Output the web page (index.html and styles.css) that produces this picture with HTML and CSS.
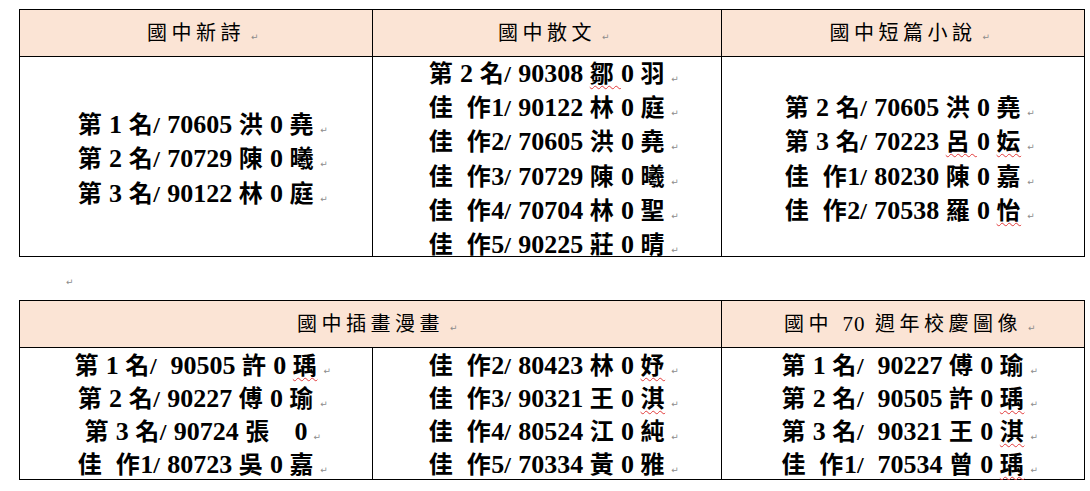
FILE: index.html
```html
<!DOCTYPE html>
<html lang="zh-Hant">
<head>
<meta charset="utf-8">
<title>得獎名單</title>
<link rel="stylesheet" href="styles.css">
</head>
<body>
<table class="awards t1">
  <colgroup><col class="c1"><col class="c2"><col class="c3"></colgroup>
  <tr class="head">
    <th>國中新詩<span class="pm">↵</span></th>
    <th>國中散文<span class="pm">↵</span></th>
    <th>國中短篇小說<span class="pm">↵</span></th>
  </tr>
  <tr class="body">
    <td><div class="cell">
      <div class="line">第 <span class="n">1</span> 名/ <span class="n">70605</span> 洪 <span class="n">0</span> 堯<span class="pm">↵</span></div>
      <div class="line">第 <span class="n">2</span> 名/ <span class="n">70729</span> 陳 <span class="n">0</span> 曦<span class="pm">↵</span></div>
      <div class="line">第 <span class="n">3</span> 名/ <span class="n">90122</span> 林 <span class="n">0</span> 庭<span class="pm">↵</span></div>
    </div></td>
    <td><div class="cell">
      <div class="line">第 <span class="n">2</span> 名/ <span class="n">90308</span> <span class="sp">鄒 </span><span class="n">0</span> 羽<span class="pm">↵</span></div>
      <div class="line">佳  作<span class="n">1</span>/ <span class="n">90122</span> 林 <span class="n">0</span> 庭<span class="pm">↵</span></div>
      <div class="line">佳  作<span class="n">2</span>/ <span class="n">70605</span> 洪 <span class="n">0</span> 堯<span class="pm">↵</span></div>
      <div class="line">佳  作<span class="n">3</span>/ <span class="n">70729</span> 陳 <span class="n">0</span> 曦<span class="pm">↵</span></div>
      <div class="line">佳  作<span class="n">4</span>/ <span class="n">70704</span> 林 <span class="n">0</span> 聖<span class="pm">↵</span></div>
      <div class="line">佳  作<span class="n">5</span>/ <span class="n">90225</span> 莊 <span class="n">0</span> 晴<span class="pm">↵</span></div>
    </div></td>
    <td><div class="cell">
      <div class="line">第 <span class="n">2</span> 名/ <span class="n">70605</span> 洪 <span class="n">0</span> 堯<span class="pm">↵</span></div>
      <div class="line">第 <span class="n">3</span> 名/ <span class="n">70223</span> <span class="sp">呂 </span><span class="n">0</span> <span class="sp">妘</span><span class="pm">↵</span></div>
      <div class="line">佳  作<span class="n">1</span>/ <span class="n">80230</span> 陳 <span class="n">0</span> 嘉<span class="pm">↵</span></div>
      <div class="line">佳  作<span class="n">2</span>/ <span class="n">70538</span> 羅 <span class="n">0</span> <span class="sp">怡</span><span class="pm">↵</span></div>
    </div></td>
  </tr>
</table>

<div class="gap">↵</div>

<table class="awards t2">
  <colgroup><col class="c1"><col class="c2"><col class="c3"></colgroup>
  <tr class="head">
    <th colspan="2">國中插畫漫畫<span class="pm">↵</span></th>
    <th>國中 <span class="num">70</span> 週年校慶圖像<span class="pm">↵</span></th>
  </tr>
  <tr class="body">
    <td><div class="cell">
      <div class="line">第 <span class="n">1</span> 名/  <span class="n">90505</span> 許 <span class="n">0</span> <span class="sp">瑀</span><span class="pm">↵</span></div>
      <div class="line">第 <span class="n">2</span> 名/ <span class="n">90227</span> 傅 <span class="n">0</span> 瑜<span class="pm">↵</span></div>
      <div class="line">第 <span class="n">3</span> 名/ <span class="n">90724</span> 張　<span class="n">0</span><span class="pm">↵</span></div>
      <div class="line">佳  作<span class="n">1</span>/ <span class="n">80723</span> 吳 <span class="n">0</span> 嘉<span class="pm">↵</span></div>
    </div></td>
    <td><div class="cell">
      <div class="line">佳  作<span class="n">2</span>/ <span class="n">80423</span> 林 <span class="n">0</span> <span class="sp">妤</span><span class="pm">↵</span></div>
      <div class="line">佳  作<span class="n">3</span>/ <span class="n">90321</span> 王 <span class="n">0</span> <span class="sp">淇</span><span class="pm">↵</span></div>
      <div class="line">佳  作<span class="n">4</span>/ <span class="n">80524</span> 江 <span class="n">0</span> 純<span class="pm">↵</span></div>
      <div class="line">佳  作<span class="n">5</span>/ <span class="n">70334</span> 黃 <span class="n">0</span> 雅<span class="pm">↵</span></div>
    </div></td>
    <td><div class="cell">
      <div class="line">第 <span class="n">1</span> 名/  <span class="n">90227</span> 傅 <span class="n">0</span> 瑜<span class="pm">↵</span></div>
      <div class="line">第 <span class="n">2</span> 名/  <span class="n">90505</span> 許 <span class="n">0</span> <span class="sp">瑀</span><span class="pm">↵</span></div>
      <div class="line">第 <span class="n">3</span> 名/  <span class="n">90321</span> 王 <span class="n">0</span> <span class="sp">淇</span><span class="pm">↵</span></div>
      <div class="line">佳  作<span class="n">1</span>/  <span class="n">70534</span> 曾 <span class="n">0</span> <span class="sp">瑀</span><span class="pm">↵</span></div>
    </div></td>
  </tr>
</table>
</body>
</html>
```

FILE: styles.css
```css
html, body {
  margin: 0;
  background: #ffffff;
}

body {
  padding: 9px 0 0 19px;
  font-family: "Liberation Serif", "Noto Sans CJK TC", serif;
  color: #000000;
}

.awards {
  border-collapse: collapse;
  table-layout: fixed;
  width: 1065px;
}

.awards col.c1 { width: 353px; }
.awards col.c2 { width: 349px; }
.awards col.c3 { width: 363px; }

.awards th,
.awards td {
  border: 1px solid #000000;
  padding: 0;
  text-align: center;
  vertical-align: middle;
}

.awards th {
  background: #fbe4d5;
  font-weight: normal;
  font-size: 20px;
  letter-spacing: 4.5px;
  height: 46px;
  line-height: 24px;
  white-space: pre;
}

.awards th .num {
  font-family: "Liberation Serif", serif;
  font-size: 21px;
  letter-spacing: 1px;
}

.awards td {
  font-weight: bold;
  font-size: 24px;
  letter-spacing: 0.6px;
}

.n {
  font-family: "Liberation Serif", "Times New Roman", serif;
  font-weight: bold;
  font-size: 26px;
  letter-spacing: 0;
}

.line {
  white-space: pre;
  box-sizing: border-box;
}

.t1 .cell {
  margin: -3px 0 -3.2px;
}

.t1 .line {
  height: 34.2px;
  padding-top: 5px;
  line-height: 29.2px;
}

.t2 .cell {
  margin: 0 0 -1px;
}

.t2 .line {
  height: 33px;
  padding-top: 3px;
  line-height: 30px;
}

.pm {
  display: inline-block;
  width: 0;
  line-height: 1;
  white-space: nowrap;
  text-indent: 6px;
  font-family: "DejaVu Sans", sans-serif;
  font-size: 9px;
  font-weight: normal;
  letter-spacing: 0;
  color: #8c8c8c;
}

.sp {
  text-decoration: underline wavy #e23b3b;
  text-decoration-thickness: 1px;
  text-underline-offset: 3px;
  text-decoration-skip-ink: none;
}

.gap {
  height: 43px;
  padding-left: 47px;
  line-height: 50px;
  font-family: "DejaVu Sans", sans-serif;
  font-size: 9px;
  color: #8c8c8c;
}
```
